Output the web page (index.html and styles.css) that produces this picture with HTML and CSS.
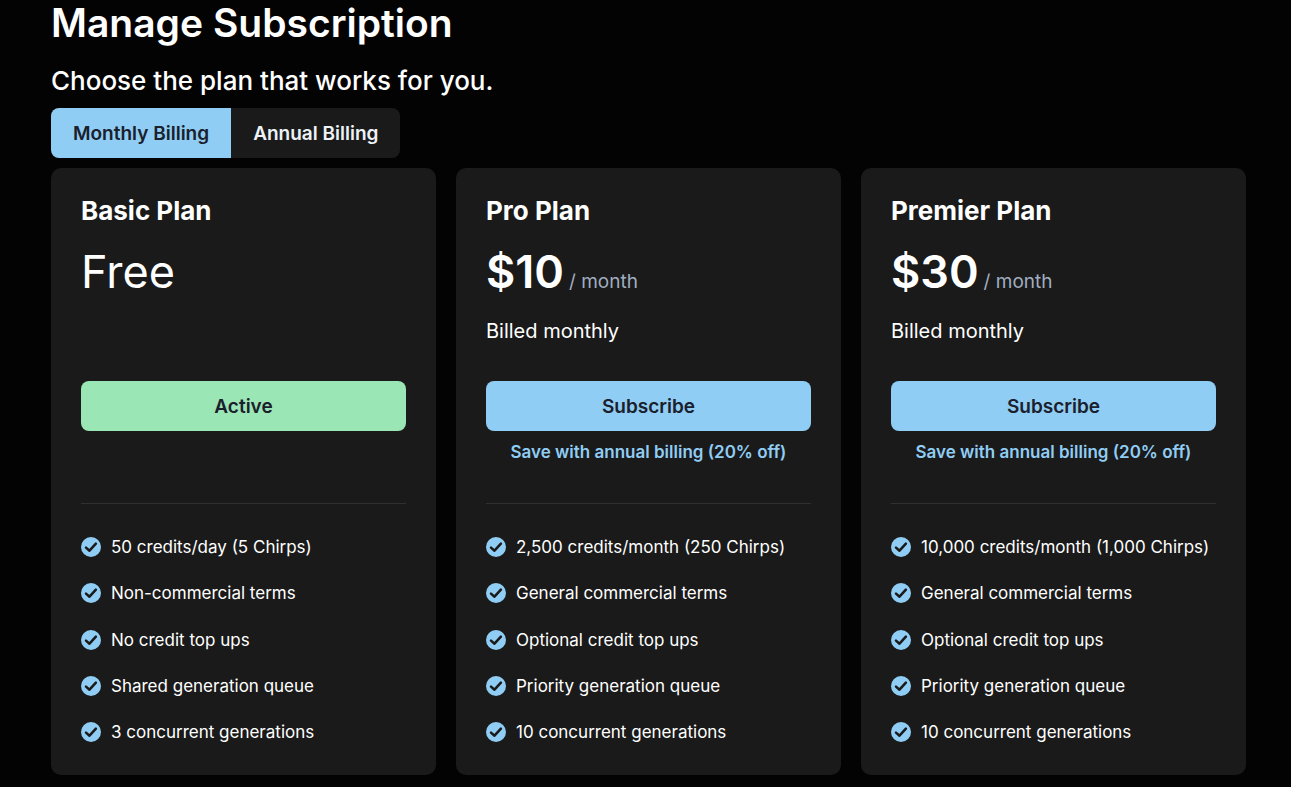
FILE: index.html
```html
<!DOCTYPE html>
<html lang="en">
<head>
<meta charset="UTF-8">
<meta name="viewport" content="width=device-width, initial-scale=1">
<title>Manage Subscription</title>
<link rel="stylesheet" href="styles.css">
</head>
<body>

<!-- shared check icon -->
<svg class="sprite" aria-hidden="true">
  <symbol id="check" viewBox="0 0 20 20">
    <circle cx="10" cy="10" r="10" fill="#90cdf4"/>
    <path d="M5 10.600L8.500 13.700L14.900 6.600" fill="none" stroke="#1a1a1a" stroke-width="2.500" stroke-linecap="round" stroke-linejoin="round"/>
  </symbol>
</svg>

<main class="page">
  <h1>Manage Subscription</h1>
  <h2>Choose the plan that works for you.</h2>

  <div class="billing">
    <button type="button" class="selected" aria-pressed="true">Monthly Billing</button>
    <button type="button" aria-pressed="false">Annual Billing</button>
  </div>

  <div class="plans">
    <section class="plan">
      <h3>Basic Plan</h3>
      <div class="price"><span class="free">Free</span></div>
      <p class="billed"></p>
      <button type="button" class="action active">Active</button>
      <div class="save"></div>
      <ul class="features">
        <li><svg><use href="#check"/></svg>50 credits/day (5 Chirps)</li>
        <li><svg><use href="#check"/></svg>Non-commercial terms</li>
        <li><svg><use href="#check"/></svg>No credit top ups</li>
        <li><svg><use href="#check"/></svg>Shared generation queue</li>
        <li><svg><use href="#check"/></svg>3 concurrent generations</li>
      </ul>
    </section>

    <section class="plan">
      <h3>Pro Plan</h3>
      <div class="price"><strong>$10</strong><span class="period">/ month</span></div>
      <p class="billed">Billed monthly</p>
      <button type="button" class="action">Subscribe</button>
      <div class="save"><a href="#annual">Save with annual billing (20% off)</a></div>
      <ul class="features">
        <li><svg><use href="#check"/></svg>2,500 credits/month (250 Chirps)</li>
        <li><svg><use href="#check"/></svg>General commercial terms</li>
        <li><svg><use href="#check"/></svg>Optional credit top ups</li>
        <li><svg><use href="#check"/></svg>Priority generation queue</li>
        <li><svg><use href="#check"/></svg>10 concurrent generations</li>
      </ul>
    </section>

    <section class="plan">
      <h3>Premier Plan</h3>
      <div class="price"><strong>$30</strong><span class="period">/ month</span></div>
      <p class="billed">Billed monthly</p>
      <button type="button" class="action">Subscribe</button>
      <div class="save"><a href="#annual">Save with annual billing (20% off)</a></div>
      <ul class="features">
        <li><svg><use href="#check"/></svg>10,000 credits/month (1,000 Chirps)</li>
        <li><svg><use href="#check"/></svg>General commercial terms</li>
        <li><svg><use href="#check"/></svg>Optional credit top ups</li>
        <li><svg><use href="#check"/></svg>Priority generation queue</li>
        <li><svg><use href="#check"/></svg>10 concurrent generations</li>
      </ul>
    </section>
  </div>
</main>

</body>
</html>
```
FILE: styles.css
```css
* {
  box-sizing: border-box;
}

body {
  margin: 0;
  background: #030303;
  color: #fff;
  font-family: Inter, "Liberation Sans", sans-serif;
}

h1, h2, h3, p, ul {
  margin: 0;
  padding: 0;
}

button {
  border: none;
  font-family: inherit;
  font-size: 19px;
  font-weight: 600;
  height: 50px;
  cursor: pointer;
}

.sprite {
  display: none;
}

.page {
  padding: 0 45px 12px 51px;
}

h1 {
  font-size: 39px;
  font-weight: 600;
  line-height: 46px;
}

h2 {
  margin-top: 20px;
  font-size: 26px;
  font-weight: 500;
  line-height: 30px;
}

.billing {
  display: inline-flex;
  margin: 12px 0 10px;
  border-radius: 8px;
  overflow: hidden;
  vertical-align: top;
}

.billing button {
  padding: 0 22px;
  background: #1a1a1a;
  color: #edf2f7;
}

.billing .selected {
  background: #90cdf4;
  color: #1a202c;
}

.plans {
  display: grid;
  grid-template-columns: repeat(3, 1fr);
  gap: 20px;
}

.plan {
  padding: 30px;
  background: #1a1a1a;
  border-radius: 10px;
}

h3 {
  font-size: 26px;
  font-weight: 700;
  line-height: 26px;
}

.price {
  display: flex;
  align-items: baseline;
  gap: 5px;
  height: 60px;
  margin-top: 18px;
  font-size: 45px;
  line-height: 60px;
}

.price strong {
  font-weight: 600;
}

.period {
  color: #a0aec0;
  font-size: 19px;
}

.billed {
  height: 30px;
  margin: 14px 0 35px;
  font-size: 20px;
  line-height: 30px;
}

.action {
  display: block;
  width: 100%;
  border-radius: 8px;
  background: #90cdf4;
  color: #1a202c;
}

.action.active {
  background: #9ae6b4;
}

.save {
  height: 73px;
  padding-top: 7px;
  border-bottom: 1px solid #303030;
  text-align: center;
}

.save a {
  color: #90cdf4;
  font-size: 17px;
  font-weight: 600;
  line-height: 28px;
  text-decoration: none;
}

.features {
  display: grid;
  align-content: space-between;
  min-height: 211px;
  margin-top: 30px;
  list-style: none;
}

.features li {
  display: flex;
  align-items: center;
  gap: 10px;
  font-size: 17px;
  line-height: 26px;
  white-space: nowrap;
}

.features svg {
  flex: none;
  width: 20px;
  height: 20px;
}
```
